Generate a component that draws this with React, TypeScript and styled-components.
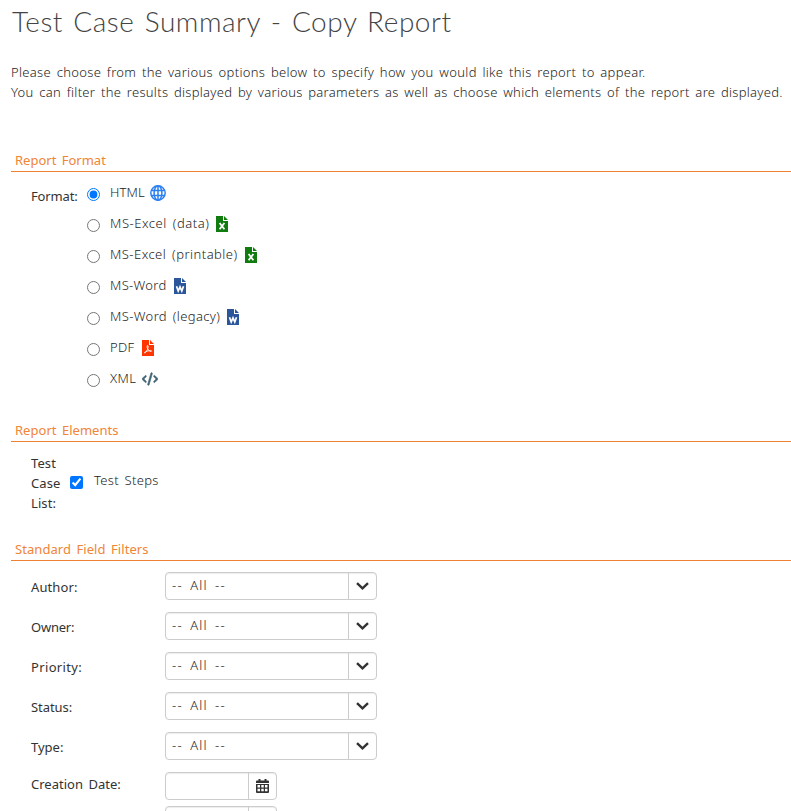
import React from 'react';
import styled, { createGlobalStyle } from 'styled-components';
import { FaCode } from 'react-icons/fa6';

const Global = createGlobalStyle`
  *, *::before, *::after { box-sizing: border-box; }
  html, body { margin: 0; background: #fff; overflow: hidden; }
  body { font: 300 13px/20px "Noto Sans", sans-serif; color: #1c1c1c; word-spacing: 2px; }
`;

const Page = styled.main`
  height: 811px;
  padding-left: 11px;
  overflow: hidden;
  display: flex;
  flex-direction: column;
`;
const Title = styled.h1`
  margin: 3px 0 1px 1px;
  font: 300 28px/36px Lato, sans-serif;
  letter-spacing: 0.53px;
  word-spacing: 2.2px;
  color: #444;
  height: 36px;
  flex: none;
  white-space: nowrap;
`;
const Intro = styled.div`
  margin-top: 22px;
  height: 88px;
  flex: none;
`;
const Text = styled.span<{ $ls?: number; $ws?: number }>`
  letter-spacing: ${p => p.$ls ?? 0.2}px;
  word-spacing: ${p => p.$ws ?? 2}px;
  white-space: nowrap;
`;
const Line = styled.p`
  margin: 0;
  display: flex;
`;
const Section = styled.section<{ $h: number }>`
  flex: none;
  height: ${p => p.$h}px;
`;
const Heading = styled.h2`
  margin: 0;
  height: 22px;
  padding-left: 4px;
  border-bottom: 1px solid #ee8134;
  font-size: 13px;
  font-weight: 400;
  line-height: 20px;
  color: #f08437;
`;
const FormatBody = styled.div`
  display: flex;
  padding: 14px 0 0 20px;
`;
const Label = styled.span<{ $w: number }>`
  width: ${p => p.$w}px;
  flex: none;
  font-weight: 400;
  color: #333;
  white-space: nowrap;
`;
const Options = styled.div`
  display: flex;
  flex-direction: column;
  margin-top: -9px;
`;
const Option = styled.label`
  display: flex;
  align-items: center;
  height: 31px;
  > ${Text} { margin-top: -2px; }
`;
const Radio = styled.input`
  width: 13px;
  height: 13px;
  margin: 3px 10px 0 0;
  accent-color: #0075ff;
`;
const Icon = styled.span<{ $gap: number }>`
  display: flex;
  margin-left: ${p => p.$gap}px;
`;
const ElementsBody = styled.div`
  display: flex;
  padding: 11px 0 0 20px;
`;
const StackedLabel = styled.div`
  width: 39px;
  display: flex;
  flex-direction: column;
  font-weight: 400;
  color: #333;
`;
const CheckOption = styled.label`
  display: flex;
  align-items: flex-start;
  padding-top: 17px;
`;
const Check = styled.input`
  width: 13px;
  height: 13px;
  margin: 6px 11px 0 0;
  accent-color: #0075ff;
`;
const Filters = styled.div`
  display: flex;
  flex-direction: column;
  padding: 11px 0 0 20px;
`;
const FilterRow = styled.div<{ $h: number; $shift: number }>`
  display: flex;
  flex: none;
  height: ${p => p.$h}px;
  > ${Label} { padding-top: ${p => p.$shift}px; }
`;
const Box = styled.div<{ $w: number }>`
  display: flex;
  width: ${p => p.$w}px;
  height: 28px;
  border: 1px solid #ccc;
  border-radius: 4px;
  box-shadow: inset 0 1px 1px rgba(0, 0, 0, 0.075);
`;
const Value = styled.div`
  flex: 1;
  padding: 2px 0 0 6px;
`;
const Trigger = styled.div`
  width: 28px;
  border-left: 1px solid #ccc;
  display: flex;
  align-items: center;
  justify-content: center;
  padding: 0 1px 1px 0;
`;

const Globe = () => (
  <svg width="16" height="16" viewBox="0 0 16 16" fill="none" stroke="#2d80f2" strokeWidth="1.5">
    <circle cx="8" cy="8" r="7.2" />
    <ellipse cx="8" cy="8" rx="3.9" ry="7.2" />
    <path d="M8 1v14M1.3 5.4h13.4M1.3 10.6h13.4" />
  </svg>
);
const File = ({ color, children }: { color: string; children: React.ReactNode }) => (
  <svg width="12" height="16" viewBox="0 0 12 16">
    <path d="M0 0h7v5h5V16H0z" fill={color} />
    <path d="M8 0L12 4H8z" fill={color} />
    {children}
  </svg>
);
const Excel = () => (
  <File color="#107c10">
    <path d="M3.600 7L8.400 13.300M8.400 7L3.600 13.300" stroke="#fff" strokeWidth="1.8" />
  </File>
);
const Word = () => (
  <File color="#2b579a">
    <path d="M2.500 8.200L4.200 13 6 8.800 7.800 13 9.500 8.200" stroke="#fff" strokeWidth="1.700" fill="none" />
  </File>
);
const Pdf = () => (
  <File color="#ff3500">
    <path d="M5.300 5.500C6.500 5.300 6.200 7.800 5.500 9.300C4.800 11 3.200 13.600 2.500 12.900C2 12.100 5.400 10.700 8.500 10.600C10.300 10.700 9.500 12 8.100 11.300C6.300 10.300 4.500 8 5.300 5.500Z" stroke="#fff" strokeWidth=".9" fill="none" />
  </File>
);
const Chevron = () => (
  <svg width="13" height="8" viewBox="0 0 13 8">
    <path d="M1 1.100L6.500 6.300 12 1.100" fill="none" stroke="#333" strokeWidth="2.400" />
  </svg>
);
const Calendar = () => (
  <svg width="13" height="14" viewBox="0 0 13 14">
    <path
      fill="#333"
      fillRule="evenodd"
      d="M2.500 0h2v1.500h4V0h2v1.500H12a1 1 0 0 1 1 1V4H0V2.500a1 1 0 0 1 1-1h1.500zM0 5h13v8a1 1 0 0 1-1 1H1a1 1 0 0 1-1-1zM1.500 6v2.500h2.500V6zM5.250 6v2.500h2.500V6zM9 6v2.500h2.500V6zM1.500 9.700v2.500h2.500V9.700zM5.250 9.700v2.500h2.500V9.700zM9 9.700v2.500h2.500V9.700z"
    />
  </svg>
);

const formats = [
  { name: 'HTML', ls: 0.1, gap: 5, icon: <Globe /> },
  { name: 'MS-Excel (data)', ls: 0.55, gap: 6, icon: <Excel /> },
  { name: 'MS-Excel (printable)', ls: 0.47, gap: 7, icon: <Excel /> },
  { name: 'MS-Word', ls: 0.3, gap: 8, icon: <Word /> },
  { name: 'MS-Word (legacy)', ls: 0.38, gap: 7, icon: <Word /> },
  { name: 'PDF', ls: 0.3, gap: 8, icon: <Pdf /> },
  { name: 'XML', ls: 0.4, gap: 5.5, icon: <FaCode size={16} color="#3f6374" stroke="#3f6374" strokeWidth={22} /> },
];
const filters = [
  { name: 'Author:', ls: 0.1 },
  { name: 'Owner:', ls: -0.22 },
  { name: 'Priority:', ls: 0.35 },
  { name: 'Status:', ls: -0.05 },
  { name: 'Type:', ls: 0 },
];

export default function App() {
  return (
    <Page>
      <Global />
      <Title>Test Case Summary - Copy Report</Title>
      <Intro>
        <Line><Text $ls={0.315}>Please choose from the various options below to specify how you would like this report to appear.</Text></Line>
        <Line><Text $ls={0.29}>You can filter the results displayed by various parameters as well as choose which elements of the report are displayed.</Text></Line>
      </Intro>
      <Section $h={270}>
        <Heading><Text $ls={0}>Report Format</Text></Heading>
        <FormatBody>
          <Label $w={56}><Text $ls={-0.15}>Format:</Text></Label>
          <Options>
            {formats.map((f, i) => (
              <Option key={f.name}>
                <Radio type="radio" name="format" defaultChecked={i === 0} />
                <Text $ls={f.ls}>{f.name}</Text>
                <Icon $gap={f.gap}>{f.icon}</Icon>
              </Option>
            ))}
          </Options>
        </FormatBody>
      </Section>
      <Section $h={119}>
        <Heading><Text $ls={0.03}>Report Elements</Text></Heading>
        <ElementsBody>
          <StackedLabel>
            <Text $ls={0.1}>Test</Text>
            <Text $ls={0.1}>Case</Text>
            <Text $ls={0.1}>List:</Text>
          </StackedLabel>
          <CheckOption>
            <Check type="checkbox" defaultChecked />
            <Text $ls={0.3}>Test Steps</Text>
          </CheckOption>
        </ElementsBody>
      </Section>
      <Section $h={280}>
        <Heading><Text $ls={0.06}>Standard Field Filters</Text></Heading>
        <Filters>
          {filters.map(f => (
            <FilterRow key={f.name} $h={40} $shift={5}>
              <Label $w={134}><Text $ls={f.ls}>{f.name}</Text></Label>
              <Box $w={212}>
                <Value><Text $ls={1.2} $ws={2.8}>-- All --</Text></Value>
                <Trigger><Chevron /></Trigger>
              </Box>
            </FilterRow>
          ))}
          <FilterRow $h={34} $shift={2}>
            <Label $w={134}><Text $ls={0.02}>Creation Date:</Text></Label>
            <Box $w={112}>
              <Value />
              <Trigger><Calendar /></Trigger>
            </Box>
          </FilterRow>
          <FilterRow $h={34} $shift={2}>
            <Label $w={134} />
            <Box $w={112}>
              <Value />
              <Trigger />
            </Box>
          </FilterRow>
        </Filters>
      </Section>
    </Page>
  );
}
